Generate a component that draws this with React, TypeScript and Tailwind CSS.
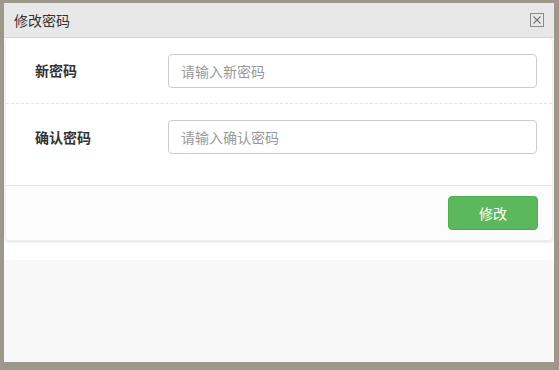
import React from 'react'

function CloseIcon() {
  return (
    <svg width="14" height="14" viewBox="0 0 14 14" className="block">
      <rect x="0.5" y="0.5" width="13" height="13" fill="none" stroke="#8a8a8a" />
      <path d="M3.5 3.5 L10.5 10.5 M10.5 3.5 L3.5 10.5" stroke="#7a7a7a" strokeWidth="1.2" />
    </svg>
  )
}

interface FieldRowProps {
  label: string
  placeholder: string
  dashed?: boolean
}

function FieldRow({ label, placeholder, dashed }: FieldRowProps) {
  return (
    <div
      className={
        dashed
          ? 'flex items-center h-[66px] border-b border-dashed border-[#e3e3e3]'
          : 'flex items-center h-[81px] pb-[15px]'
      }
    >
      <div className="w-[162px] pl-[29px] text-[14px] font-bold text-[#333]">{label}</div>
      <input
        type="password"
        placeholder={placeholder}
        className="w-[369px] h-[34px] rounded-[4px] border border-[#cccccc] px-[12px] text-[14px] text-[#555] placeholder:text-[#999] outline-none"
      />
    </div>
  )
}

export default function App() {
  return (
    <div
      className="w-[559px] h-[370px] bg-[#9d998a] pt-[3px] pl-[4px] overflow-hidden"
      style={{ fontFamily: '"Noto Sans CJK SC", "Noto Sans", sans-serif' }}
    >
      <div className="w-[550px] h-[359px] flex flex-col bg-[#f8f8f8]">
        <div className="h-[35px] flex items-center justify-between bg-[#e8e8e8] border-b border-[#d9d9d9] pl-[10px] pr-[10px]">
          <span className="text-[14px] text-[#333]">修改密码</span>
          <CloseIcon />
        </div>
        <div className="bg-white h-[222px] pl-px pr-px">
          <div className="rounded-[4px] bg-white shadow-[0_1px_3px_rgba(0,0,0,0.12)] border border-t-0 border-[#eeeeee]">
            <FieldRow label="新密码" placeholder="请输入新密码" dashed />
            <FieldRow label="确认密码" placeholder="请输入确认密码" />
            <div className="h-[55px] border-t border-[#e5e5e5] bg-[#fcfcfc] flex items-center justify-end pr-[14px] rounded-b-[4px]">
              <button className="w-[90px] h-[34px] rounded-[4px] bg-[#5cb85c] border border-[#4cae4c] text-white text-[14px]">
                修改
              </button>
            </div>
          </div>
        </div>
      </div>
    </div>
  )
}
